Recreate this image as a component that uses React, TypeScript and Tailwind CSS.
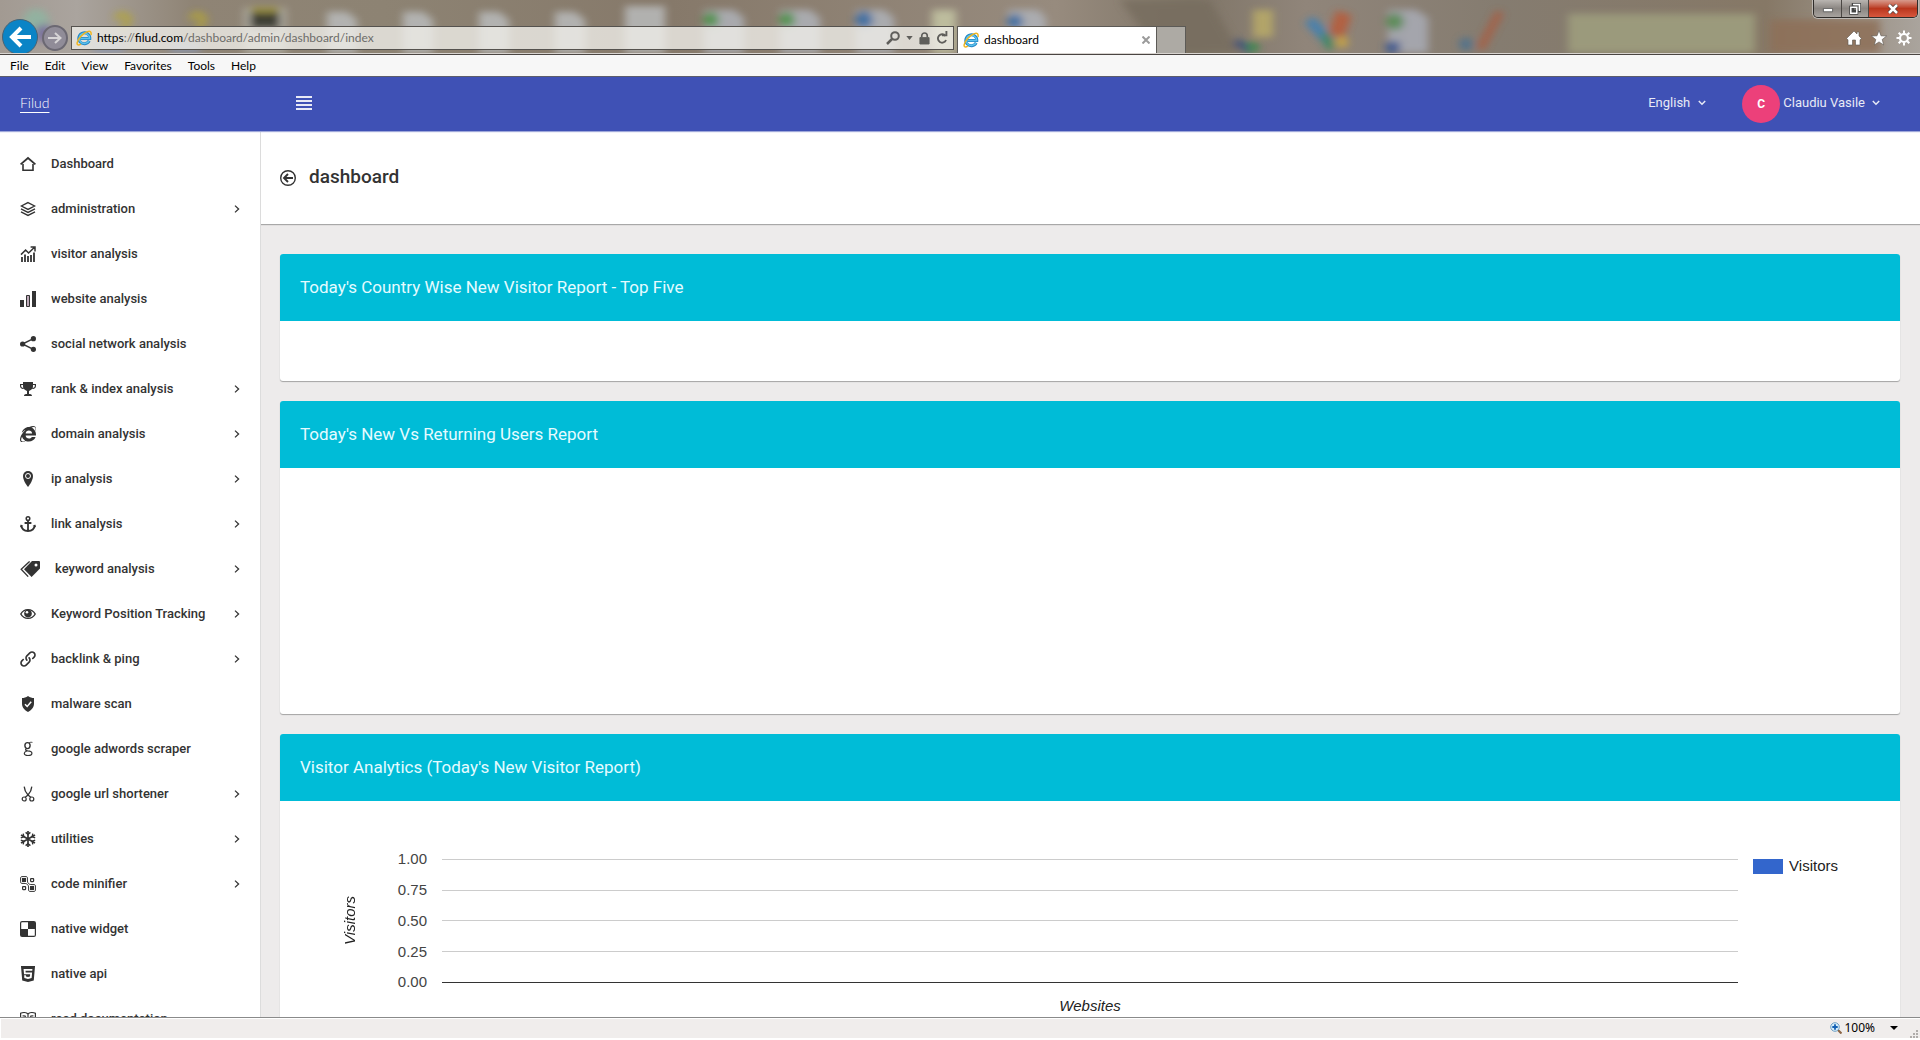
import React from "react";
import { ImTrophy, ImLink, ImHtmlFive } from "react-icons/im";
import { FaInternetExplorer } from "react-icons/fa";

type IconProps = { children: React.ReactNode; wide?: boolean };

function Glyph({ children, wide }: IconProps) {
  return (
    <svg
      aria-hidden="true"
      viewBox={wide ? "0 0 20 16" : "0 0 16 16"}
      className={wide ? "h-4 w-5 shrink-0" : "h-4 w-4 shrink-0"}
      fill="none"
      stroke="currentColor"
    >
      {children}
    </svg>
  );
}

const icons: Record<string, React.ReactNode> = {
  home: (
    <Glyph>
      <path d="M.6 8.4 8 2l7.4 6.4" strokeWidth="1.8" />
      <path d="M3 8v6.2h10V8" strokeWidth="1.6" />
    </Glyph>
  ),
  layers: (
    <Glyph>
      <path d="M8 1.6 14.6 5 8 8.4 1.4 5z" strokeWidth="1.3" />
      <path d="M1 7.8 8 11.4l7-3.6" strokeWidth="1.3" />
      <path d="M1 10.8 8 14.4l7-3.6" strokeWidth="1.3" />
    </Glyph>
  ),
  growth: (
    <Glyph>
      <path d="M1 8.6 5.6 4l3 3L14 1.8M10.6 1H15v4.4" strokeWidth="1.5" />
      <path d="M2 11v5M5 8.6V16M8 10V16M11 9V16M14 6.5V16" strokeWidth="1.8" />
    </Glyph>
  ),
  bars: (
    <Glyph>
      <path d="M0 9h4v7H0zM12 0h4v16h-4z" fill="currentColor" stroke="none" />
      <path d="M6.5 4.5h3v11h-3z" fill="#bda9b8" />
    </Glyph>
  ),
  share: (
    <Glyph>
      <g fill="currentColor" stroke="none">
        <circle cx="2.6" cy="8" r="2.6" />
        <circle cx="13.4" cy="2.7" r="2.6" />
        <circle cx="13.4" cy="13.3" r="2.6" />
      </g>
      <path d="m13.4 2.7-11 5.3 11 5.3" strokeWidth="1.4" />
    </Glyph>
  ),
  trophy: <ImTrophy className="h-4 w-4 shrink-0" />,
  browser: <FaInternetExplorer className="h-4 w-4 shrink-0" />,
  pin: (
    <Glyph>
      <path d="M8 0a5 5 0 0 0-5 5c0 5 5 11 5 11s5-6 5-11a5 5 0 0 0-5-5z" fill="currentColor" stroke="none" />
      <circle cx="8" cy="5" r="2.5" stroke="#fff" />
    </Glyph>
  ),
  anchor: (
    <Glyph>
      <circle cx="8" cy="2.6" r="1.8" strokeWidth="1.5" />
      <path d="M8 4.4V15M4.6 7h6.8M1.2 9.4C1.6 12.8 4.4 15 8 15s6.4-2.2 6.8-5.6" strokeWidth="1.8" />
      <path d="m0 11.2.8-2.8 2.6 1.6zM16 11.2l-.8-2.8-2.6 1.6z" fill="currentColor" stroke="none" />
    </Glyph>
  ),
  tags: (
    <Glyph wide>
      <path d="M12 0h7a1 1 0 0 1 1 1v6.4L11.6 16 4 8.2z" fill="currentColor" stroke="none" />
      <circle cx="16" cy="4" r="1.5" fill="#fff" stroke="none" />
      <path d="M9.6.4 1.2 8.2l7 7.4" strokeWidth="1.3" />
    </Glyph>
  ),
  eye: (
    <Glyph>
      <path d="M.8 8C2.4 5 5 3.6 8 3.6S13.6 5 15.2 8c-1.6 3-4.2 4.4-7.2 4.4S2.4 11 .8 8z" strokeWidth="1.4" />
      <circle cx="8" cy="7.6" r="3.8" fill="currentColor" stroke="none" />
      <circle cx="7" cy="6.2" r="1.3" fill="#fff" stroke="none" />
    </Glyph>
  ),
  link: <ImLink className="h-4 w-4 shrink-0" />,
  shield: (
    <Glyph>
      <path d="M8 0c2 1.4 4 2 6 2v5.6c0 4-2.6 6.8-6 8.4-3.4-1.6-6-4.4-6-8.4V2c2 0 4-.6 6-2z" fill="currentColor" stroke="none" />
      <path d="m5 8.2 2.2 2.3 4-4.7" stroke="#fff" strokeWidth="1.5" />
    </Glyph>
  ),
  google: (
    <Glyph>
      <ellipse cx="7.5" cy="4.6" rx="2.6" ry="3" strokeWidth="1.4" />
      <path d="M9 2C10 1.2 11 1.2 12.4 1.4" />
      <path d="M6.4 7.8c-1.6 1.2-.8 1.8 1.3 2.1 2.8.3 4.2.9 4.2 2.3 0 1.5-1.7 2.3-3.9 2.3s-3.7-.8-3.7-2.2c0-1.2 1.2-1.9 2.6-2.3" strokeWidth="1.2" />
    </Glyph>
  ),
  scissors: (
    <Glyph>
      <path d="M4.2.6c.2 3 1.6 6 3.8 8.4l3 2.4M11.8.6c-.2 3-1.6 6-3.8 8.4l-3 2.4" strokeWidth="1.3" />
      <circle cx="4.2" cy="13" r="2" strokeWidth="1.2" />
      <circle cx="11.8" cy="13" r="2" strokeWidth="1.2" />
    </Glyph>
  ),
  snow: (
    <Glyph>
      <path d="M8 0v16M1 4l14 8M15 4 1 12" strokeWidth="1.7" />
      <path d="m5.6 1.4 2.4 2 2.4-2M5.6 14.6l2.4-2 2.4 2M.8 6.8l3-1L3.2 2.6M15.2 9.2l-3 1 .6 3.2M15.2 6.8l-3-1 .6-3.2M.8 9.2l3 1-.6 3.2" strokeWidth="1.4" />
    </Glyph>
  ),
  nodes: (
    <Glyph>
      <rect x="2" y="2" width="4" height="4" fill="currentColor" stroke="none" />
      <rect x="10" y="10" width="4" height="4" fill="currentColor" stroke="none" />
      <path d="M.6 5.8V2C.6 1 1.2.6 2 .6h4C7 .6 7.4 1 7.4 2v2c0 3 1 4.6 4.6 4.6h2c1 0 1.4.4 1.4 1.4v4c0 1-.4 1.4-1.4 1.4h-4c-1 0-1.4-.4-1.4-1.4v-2c0-3-1-4.600-4.600-4.600H2C1 7.400.6 7 .6 5.800z" />
      <rect x="10.6" y="2.6" width="3" height="3" rx=".5" strokeWidth="1.2" />
      <rect x="2.6" y="10.6" width="3" height="3" rx=".5" strokeWidth="1.2" />
    </Glyph>
  ),
  widget: (
    <Glyph>
      <rect x=".6" y=".6" width="14.8" height="14.8" rx="1.5" strokeWidth="1.2" />
      <path d="M8 1h7v7H8zM1 8h7v7H1z" fill="currentColor" stroke="none" />
    </Glyph>
  ),
  html: <ImHtmlFive className="h-4 w-4 shrink-0" />,
  book: (
    <Glyph>
      <path d="M8 3C6.5 1.5 3 1.2.6 2.2V14c2.4-1 5.9-.7 7.4.8 1.5-1.5 5-1.8 7.4-.8V2.2C13 1.2 9.5 1.5 8 3zM8 3v11.5M2.5 5c1.2-.3 2.5-.2 3.5.4M13.5 5c-1.2-.3-2.5-.2-3.5.4" strokeWidth="1.2" />
    </Glyph>
  ),
};

const navItems: { icon: string; label: string; more?: boolean }[] = [
  { icon: "home", label: "Dashboard" },
  { icon: "layers", label: "administration", more: true },
  { icon: "growth", label: "visitor analysis" },
  { icon: "bars", label: "website analysis" },
  { icon: "share", label: "social network analysis" },
  { icon: "trophy", label: "rank & index analysis", more: true },
  { icon: "browser", label: "domain analysis", more: true },
  { icon: "pin", label: "ip analysis", more: true },
  { icon: "anchor", label: "link analysis", more: true },
  { icon: "tags", label: "keyword analysis", more: true },
  { icon: "eye", label: "Keyword Position Tracking", more: true },
  { icon: "link", label: "backlink & ping", more: true },
  { icon: "shield", label: "malware scan" },
  { icon: "google", label: "google adwords scraper" },
  { icon: "scissors", label: "google url shortener", more: true },
  { icon: "snow", label: "utilities", more: true },
  { icon: "nodes", label: "code minifier", more: true },
  { icon: "widget", label: "native widget" },
  { icon: "html", label: "native api" },
  { icon: "book", label: "read documentation" },
];

function BrowserMark() {
  return (
    <svg aria-hidden="true" viewBox="0 0 16 16" className="h-4 w-4 shrink-0" fill="none">
      <path d="M13.2 10.8A5.5 5.5 0 1 1 13.8 8.6H4.5" stroke="#2586c4" strokeWidth="3" />
      <path d="M13 10.8A5.2 5.2 0 1 1 13.6 8.4H4.5" stroke="#5cc3ee" strokeWidth="1.5" />
      <path d="M15 5C15.6 2 14.2.6 11.5 1.6 7 3.2 2 8.5 1.2 12.6c-.5 2.6 1.2 3 3.6 1.6" stroke="#f0b51f" strokeWidth="1.5" />
    </svg>
  );
}

function DesktopBackdrop() {
  return (
    <svg aria-hidden="true" className="absolute inset-0 h-full w-full" preserveAspectRatio="none" viewBox="0 0 1920 54">
      <defs>
        <linearGradient id="desk">
          <stop offset="0" stopColor="#a29a92" />
          <stop offset=".04" stopColor="#aaa49e" />
          <stop offset=".1" stopColor="#8f8475" />
          <stop offset=".2" stopColor="#8d8373" />
          <stop offset=".35" stopColor="#86796a" />
          <stop offset=".55" stopColor="#978b7e" />
          <stop offset=".62" stopColor="#7f7567" />
          <stop offset=".68" stopColor="#90857a" />
          <stop offset=".78" stopColor="#857c70" />
          <stop offset=".92" stopColor="#867866" />
          <stop offset="1" stopColor="#aaa49d" />
        </linearGradient>
        <filter id="haze" x="-20%" y="-50%" width="140%" height="200%">
          <feGaussianBlur stdDeviation="4" />
        </filter>
      </defs>
      <rect width="1920" height="54" fill="url(#desk)" />
      <g filter="url(#haze)" opacity=".85">
        <path d="M1120 0h90l30 54h-80z" fill="#776d5f" />
        <circle cx="36" cy="22" r="13" fill="#8fb5a2" />
        <circle cx="44" cy="34" r="9" fill="#75699f" />
        <path d="M116 20c2-8 14-6 13 1-1 4-6 4-6 9" stroke="#b4a535" strokeWidth="6" fill="none" />
        <path d="M191 20c2-8 14-6 13 1-1 4-6 4-6 9" stroke="#b4a535" strokeWidth="6" fill="none" />
        <path d="M94 42h30v12H94zM170 42h30v12h-30z" fill="#8c98b0" />
        <path d="M244 8h42v46h-42z" fill="#b4b2a8" />
        <path d="M250 12h30v18h-30z" fill="#30342a" />
        <path d="M250 8h30v4h-30z" fill="#a89d2c" />
        <path d="M327 12h20l10 8v34h-30zM403 12h20l10 8v34h-30zM479 12h20l10 8v34h-30zM555 12h20l10 8v34h-30zM625 6h40v48h-40z" fill="#b9bbbc" />
        <path d="M704 10h30l10 8v36h-40zM780 10h30l10 8v36h-40zM856 10h28l10 8v36h-38zM1008 10h30l8 8v36h-38z" fill="#afb2b9" />
        <circle cx="711" cy="20" r="8" fill="#4e9950" />
        <circle cx="787" cy="20" r="8" fill="#4e9950" />
        <circle cx="864" cy="20" r="9" fill="#3870aa" />
        <circle cx="1015" cy="22" r="8" fill="#3870aa" />
        <path d="M932 10h24v44h-24z" fill="#c5c6a4" />
        <path d="M1253 10h20v28h-20z" fill="#b9ab68" />
        <path d="m1235 42 16 10" stroke="#2d4c79" strokeWidth="8" />
        <circle cx="1253" cy="48" r="6" fill="#358b4a" />
        <path d="m1309 20 20 22" stroke="#3a80b8" strokeWidth="11" />
        <path d="m1344 13-8 24" stroke="#b95a39" strokeWidth="16" />
        <path d="m1324 34 8 16" stroke="#2c8a56" strokeWidth="8" />
        <circle cx="1342" cy="43" r="6" fill="#d0a83c" />
        <path d="M1388 10h28l12 8v36h-40z" fill="#a9acb6" />
        <circle cx="1395" cy="22" r="9" fill="#589059" />
        <path d="M1386 42h14v12h-14z" fill="#385997" />
        <path d="m1500 12-20 38" stroke="#aa5c3f" strokeWidth="8" />
        <circle cx="1466" cy="45" r="7" fill="#4c718f" />
        <path d="M1770 20h110v34h-110z" fill="#8e7058" />
      </g>
      <path d="M1568 14h187v40h-187z" fill="#9b9a7b" filter="url(#haze)" />
    </svg>
  );
}

function BrowserChrome() {
  return (
    <div className="relative h-[54px] shrink-0 overflow-hidden border-b border-[#d8d4d0]">
      <DesktopBackdrop />
      <div className="relative flex h-full items-end">
        <button aria-label="Back" className="mb-[-2px] ml-[2px] flex h-9 w-9 shrink-0 items-center justify-center rounded-full border border-[#4a6272] bg-[#0b84c6]">
          <svg viewBox="0 0 24 24" className="h-6 w-6" fill="none" stroke="#fff" strokeWidth="4">
            <path d="M23 12H4M13 3l-9 9 9 9" />
          </svg>
        </button>
        <button aria-label="Forward" className="mb-[2px] ml-1 flex h-[26px] w-[26px] shrink-0 items-center justify-center rounded-full border-2 border-[#6b6872] bg-[#908c98]">
          <svg viewBox="0 0 16 16" className="h-4 w-4" fill="none" stroke="#d6d4d6" strokeWidth="2">
            <path d="M1 8h12M8 3l5.5 5L8 13" />
          </svg>
        </button>
        <div className="mb-[3px] ml-[3px] flex h-6 w-[883px] min-w-0 items-center border border-[#55524e] bg-[#efeee8]/80 pl-1 pr-[5px]">
          <BrowserMark />
          <div className="ml-[5px] flex-1 font-['Lato'] text-xs text-[#6d6c69]">
            <span className="text-black">https</span>://<span className="text-black">filud.com</span>/dashboard/admin/dashboard/index
          </div>
          <div className="flex items-center gap-[6px] text-[#5f5e5b]">
            <button aria-label="Search">
              <svg viewBox="0 0 14 14" className="h-[14px] w-[14px]" fill="none" stroke="currentColor" strokeWidth="2">
                <circle cx="9" cy="5" r="3.8" />
                <path d="m6 8-5 5" strokeWidth="2.5" />
              </svg>
            </button>
            <button aria-label="Search options">
              <svg viewBox="0 0 8 5" className="h-1 w-[7px]" fill="currentColor"><path d="M0 0h8L4 5z" /></svg>
            </button>
            <svg aria-hidden="true" viewBox="0 0 12 14" className="h-[13px] w-[11px]" fill="none">
              <path d="M1 6h10v7H1z" fill="currentColor" stroke="currentColor" />
              <path d="M3 6V4a3 3 0 0 1 6 0v2" stroke="currentColor" strokeWidth="1.8" />
            </svg>
            <button aria-label="Refresh">
              <svg viewBox="0 0 12 14" className="h-[14px] w-[12px]" fill="none" stroke="currentColor" strokeWidth="1.9">
                <path d="M9.5 5A4.2 4.2 0 1 0 10 9" />
                <path d="M6 4.4h4.4V0" />
              </svg>
            </button>
          </div>
        </div>
        <div className="ml-[3px] flex h-[27px] w-[200px] shrink-0 items-center border border-b-0 border-[#5c5a56] bg-white pl-[5px] pr-[6px]">
          <BrowserMark />
          <span className="ml-[5px] flex-1 font-['Lato'] text-xs text-black">dashboard</span>
          <button aria-label="Close tab">
            <svg viewBox="0 0 8 8" className="h-2 w-2" stroke="#9b9b9b" strokeWidth="2"><path d="m.5.5 7 7M7.5.5l-7 7" /></svg>
          </button>
        </div>
        <button aria-label="New tab" className="h-[27px] w-[29px] shrink-0 border border-b-0 border-l-0 border-[#5c5a56] bg-[#adaaa4]" />
        <div className="ml-auto mr-[2px] flex h-full flex-col items-end justify-between pb-[7px]">
          <div className="flex h-[18px] overflow-hidden rounded-b-[5px] border border-t-0 border-[#2f2c2a] shadow-[0_0_0_1px_#bdb8b3]">
            <button aria-label="Minimize" className="flex w-[28px] items-center justify-center border-r border-[#4b4744] bg-linear-to-b from-[#b9b5b1] via-[#8b8682] to-[#a8a39f]">
              <svg viewBox="0 0 12 6" className="mt-1 h-[5px] w-3"><path d="M.5.5h11v4H.5z" fill="#fff" stroke="#555" /></svg>
            </button>
            <button aria-label="Restore" className="flex w-[27px] items-center justify-center border-r border-[#4b4744] bg-linear-to-b from-[#b9b5b1] via-[#8b8682] to-[#a8a39f]">
              <svg viewBox="0 0 12 12" className="h-3 w-3" fill="none">
                <path d="M4 1h7v7H4zM1.5 4h6.5v6.5H1.5z" stroke="#444" strokeWidth="2.5" />
                <path d="M4 1.5h6.5V8M1.8 4.3h6v6h-6z" stroke="#fff" strokeWidth="1.5" />
              </svg>
            </button>
            <button aria-label="Close" className="flex w-12 items-center justify-center bg-linear-to-b from-[#d79a8c] via-[#b9361d] to-[#d8573d]">
              <svg viewBox="0 0 12 10" className="h-[10px] w-3"><path d="m2 1 8 8M10 1 2 9" stroke="#503c3a" strokeWidth="4" /><path d="m2 1 8 8M10 1 2 9" stroke="#fff" strokeWidth="2.5" /></svg>
            </button>
          </div>
          <div className="flex gap-[9px] pr-[6px] text-white">
            <button aria-label="Home">
              <svg viewBox="0 0 16 16" className="h-4 w-4" fill="currentColor" stroke="#5d5751" strokeWidth=".6"><path d="M8 1 .5 8.5 2 9.8V15h4.5v-5h3v5H14V9.8l1.5-1.3L13 6V2h-2v2z" /></svg>
            </button>
            <button aria-label="Favorites list">
              <svg viewBox="0 0 16 16" className="h-4 w-4" fill="currentColor" stroke="#5d5751" strokeWidth=".6"><path d="m8 .5 2 5.3 5.6.2-4.4 3.5 1.5 5.5L8 11.9 3.3 15l1.5-5.5L.4 6 6 5.8z" /></svg>
            </button>
            <button aria-label="Settings">
              <svg viewBox="0 0 16 16" className="h-4 w-4" fill="none" stroke="currentColor"><circle cx="8" cy="8" r="4" strokeWidth="2.2" /><path d="M8 .5v3M8 12.5v3M.5 8h3M12.5 8h3M2.7 2.7l2 2M11.3 11.3l2 2M2.7 13.3l2-2M11.3 4.7l2-2" strokeWidth="2" /></svg>
            </button>
          </div>
        </div>
      </div>
    </div>
  );
}

function Chevron() {
  return (
    <svg aria-hidden="true" viewBox="0 0 8 6" className="h-[6px] w-2 shrink-0" fill="none" stroke="currentColor" strokeWidth="1.5">
      <path d="m.8 1 3.2 3.2L7.2 1" />
    </svg>
  );
}

function AppHeader() {
  return (
    <header className="relative z-10 flex h-[54px] shrink-0 items-center bg-[#3f51b5] pb-[2px] text-[#e8eaf6] shadow-[0_1px_1px_#9fa8da]">
      <a href="#home" className="ml-5 w-[276px] font-['Lato'] text-sm font-light text-white underline underline-offset-4">Filud</a>
      <button aria-label="Toggle menu">
        <svg viewBox="0 0 16 14" className="h-[14px] w-4" stroke="currentColor" strokeWidth="2"><path d="M0 1h16M0 5h16M0 9h16M0 13h16" /></svg>
      </button>
      <button className="ml-auto flex items-center gap-2 text-[13px]">English <Chevron /></button>
      <button className="ml-9 mr-10 flex items-center text-[13px]">
        <span className="mr-[3px] mt-[2px] flex h-[38px] w-[38px] items-center justify-center rounded-full bg-[#ec407a] text-xs font-bold text-white">C</span>
        <span className="mr-[7px]">Claudiu Vasile</span>
        <Chevron />
      </button>
    </header>
  );
}

function Sidebar() {
  return (
    <nav className="w-[261px] shrink-0 overflow-hidden border-r border-[#dcdcdc] bg-white pt-[10px] text-[#333]">
      {navItems.map((item) => (
        <a key={item.label} href="#section" className="flex h-[45px] items-center pl-5 pr-5 text-[13px] font-medium">
          {icons[item.icon]}
          <span className="ml-[15px] flex-1 whitespace-nowrap">{item.label}</span>
          {item.more && (
            <svg aria-hidden="true" viewBox="0 0 6 8" className="h-2 w-[6px]" fill="none" stroke="currentColor" strokeWidth="1.3">
              <path d="m1 .6 3.6 3.4L1 7.4" />
            </svg>
          )}
        </a>
      ))}
    </nav>
  );
}

function Panel({ title, children }: { title: string; children: React.ReactNode }) {
  return (
    <section className="shrink-0 rounded-[3px] bg-white shadow-[0_1px_1px_#a3a3a3]">
      <h2 className="flex h-[67px] items-center rounded-t-[3px] bg-[#00bcd7] px-5 text-[17px] text-[#e5fbff]">{title}</h2>
      {children}
    </section>
  );
}

const ticks = ["1.00", "0.75", "0.50", "0.25", "0.00"];

function VisitorChart() {
  return (
    <div className="flex pb-10 pl-[60px] pr-[62px] pt-[43px] font-['Liberation_Sans'] text-[15px]">
      <div className="flex h-[152px] w-5 items-center justify-center">
        <span className="rotate-180 italic text-[#222] [writing-mode:vertical-rl]">Visitors</span>
      </div>
      <div className="flex-1">
        <div className="flex h-[154px] flex-col">
          {ticks.map((tick, i) => (
            <div key={tick} className="flex flex-1 items-center">
              <span className="w-[67px] text-right text-[#444]">{tick}</span>
              <span className={i === ticks.length - 1 ? "ml-[15px] h-px flex-1 bg-[#333]" : "ml-[15px] h-px flex-1 bg-[#ccc]"} />
            </div>
          ))}
        </div>
        <p className="ml-[82px] text-center italic leading-4 text-[#222]">Websites</p>
      </div>
      <div className="ml-[15px] mt-3 flex h-5 items-center gap-[6px] text-[#222]">
        <span className="h-[15px] w-[30px] bg-[#3366cc]" />
        Visitors
      </div>
    </div>
  );
}

export default function App() {
  return (
    <div className="flex h-screen flex-col overflow-hidden bg-[#edebeb] font-['Roboto']">
      <BrowserChrome />
      <div className="flex h-[23px] shrink-0 items-center gap-4 border-b border-t border-b-[#5c5d6b] border-t-[#4a4542] bg-[#f7f7f7] pl-[10px] font-['Lato'] text-xs text-black">
        {["File", "Edit", "View", "Favorites", "Tools", "Help"].map((name) => (
          <button key={name}>{name}</button>
        ))}
      </div>
      <AppHeader />
      <div className="flex min-h-0 flex-1">
        <Sidebar />
        <main className="flex min-w-0 flex-1 flex-col overflow-hidden">
          <div className="flex h-[93px] shrink-0 items-center bg-white pl-[19px] text-[#333] shadow-[0_1px_1px_#a8a8a8]">
            <button aria-label="Go back">
              <svg viewBox="0 0 16 16" className="h-4 w-4" fill="none" stroke="currentColor">
                <circle cx="8" cy="8" r="7.3" strokeWidth="1.4" />
                <path d="M13 8H4.5M8 4 4 8l4 4" strokeWidth="1.9" />
              </svg>
            </button>
            <h1 className="ml-[13px] text-[19px] font-medium">dashboard</h1>
          </div>
          <div className="flex flex-col gap-5 pl-[19px] pr-5 pt-[30px]">
            <Panel title="Today's Country Wise New Visitor Report - Top Five"><div className="h-[60px]" /></Panel>
            <Panel title="Today's New Vs Returning Users Report"><div className="h-[246px]" /></Panel>
            <Panel title="Visitor Analytics (Today's New Visitor Report)"><VisitorChart /></Panel>
          </div>
        </main>
      </div>
      <footer className="relative z-10 flex h-[23px] shrink-0 items-center justify-end border-b-2 border-t border-b-white border-t-[#8a8a8a] bg-[#f0edec] pr-[2px] font-['Noto_Sans'] text-xs text-black shadow-[inset_1px_1px_0_#fff]">
        <button className="flex items-center gap-[2px]">
          <svg aria-hidden="true" viewBox="0 0 12 12" className="h-3 w-3">
            <path d="m8 8 3.5 3.5" stroke="#8c6647" strokeWidth="2.2" />
            <circle cx="5" cy="5" r="4.3" fill="#d6eefb" stroke="#6f9fc4" />
            <path d="M5 2.3v5.4M2.3 5h5.4" stroke="#1260b4" strokeWidth="1.8" />
          </svg>
          100%
          <svg aria-hidden="true" viewBox="0 0 8 4" className="ml-[13px] h-1 w-2"><path d="M0 0h8L4 4z" /></svg>
        </button>
        <svg aria-hidden="true" viewBox="0 0 8 8" className="ml-3 h-2 w-2 self-end fill-[#b0adab]">
          <path d="M6 0h2v2H6zM3 3h2v2H3zM6 3h2v2H6zM0 6h2v2H0zM3 6h2v2H3zM6 6h2v2H6z" />
        </svg>
      </footer>
    </div>
  );
}
